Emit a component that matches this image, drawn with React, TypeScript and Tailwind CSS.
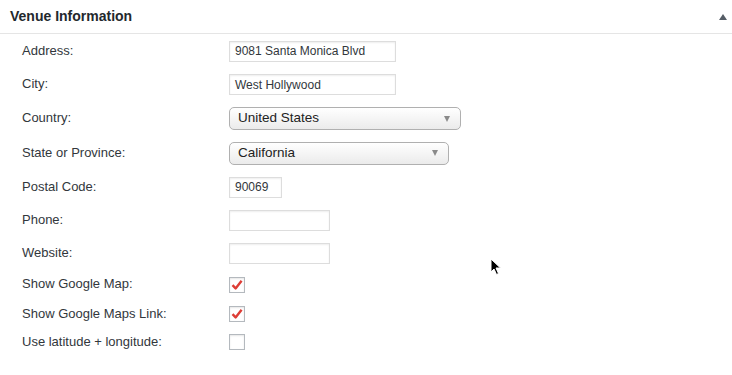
const font = { fontFamily: '"Liberation Sans", Arial, sans-serif' }

type Row = { label: string; h: string; field: React.ReactNode }

function TextInput({ value, w }: { value?: string; w: string }) {
  return (
    <div className={`${w} h-[21px] border border-[#dddddd] bg-white shadow-[inset_0_1px_2px_rgba(0,0,0,0.07)] flex items-center px-[5px] text-[12px] text-[#32373c]`}>
      {value}
    </div>
  )
}

function Select({ value, w }: { value: string; w: string }) {
  return (
    <div className={`${w} h-[23px] rounded-[5px] border border-[#b0b0b0] bg-gradient-to-b from-white via-[#f5f5f5] to-[#ebebeb] flex items-center justify-between pl-[8px] pr-[10px] text-[13.5px] text-[#222]`}>
      <span>{value}</span>
      <span className="w-0 h-0 border-l-[3.5px] border-r-[3.5px] border-t-[6px] border-l-transparent border-r-transparent border-t-[#8a8a8a]" />
    </div>
  )
}

function Checkbox({ checked }: { checked?: boolean }) {
  return (
    <div className="w-[16px] h-[16px] border border-[#b4b9be] bg-white shadow-[inset_0_1px_2px_rgba(0,0,0,0.1)] flex items-center justify-center">
      {checked && (
        <svg width="14" height="14" viewBox="0 0 14 14">
          <path d="M2.5 7.2 L5.6 10.4 L11.6 2.8" fill="none" stroke="#dd3d36" strokeWidth="2.4" strokeLinejoin="round" />
        </svg>
      )}
    </div>
  )
}

export default function App() {
  const rows: Row[] = [
    { label: "Address:", h: "h-[34px]", field: <TextInput value="9081 Santa Monica Blvd" w="w-[167px]" /> },
    { label: "City:", h: "h-[33px]", field: <TextInput value="West Hollywood" w="w-[167px]" /> },
    { label: "Country:", h: "h-[35px]", field: <Select value="United States" w="w-[232px]" /> },
    { label: "State or Province:", h: "h-[34px]", field: <Select value="California" w="w-[220px]" /> },
    { label: "Postal Code:", h: "h-[34px]", field: <TextInput value="90069" w="w-[53px]" /> },
    { label: "Phone:", h: "h-[33px]", field: <TextInput w="w-[101px]" /> },
    { label: "Website:", h: "h-[32px]", field: <TextInput w="w-[101px]" /> },
    { label: "Show Google Map:", h: "h-[31px]", field: <Checkbox checked /> },
    { label: "Show Google Maps Link:", h: "h-[28px]", field: <Checkbox checked /> },
    { label: "Use latitude + longitude:", h: "h-[28px]", field: <Checkbox /> },
  ]

  return (
    <div className="relative w-[732px] h-[375px] bg-white overflow-hidden" style={font}>
      <div className="h-[34px] border-b border-[#e5e5e5] flex items-center justify-between pl-[10px] pr-[5px]">
        <h2 className="text-[14px] font-bold text-[#23282d]">Venue Information</h2>
        <span className="w-0 h-0 border-l-[4px] border-r-[4px] border-b-[6px] border-l-transparent border-r-transparent border-b-[#555d66]" />
      </div>
      <div className="flex flex-col">
        {rows.map((r) => (
          <div key={r.label} className={`${r.h} flex items-center`}>
            <div className="w-[229px] pl-[22px] text-[13px] text-[#32373c] -mt-[1px]">{r.label}</div>
            {r.field}
          </div>
        ))}
      </div>
      <svg className="absolute left-[490px] top-[258px]" width="12" height="18" viewBox="0 0 12 18">
        <path d="M1 1 L1 14 L4 11 L6.5 16.5 L8.5 15.5 L6 10 L10.5 10 Z" fill="#000" stroke="#fff" strokeWidth="1" strokeLinejoin="round" />
      </svg>
    </div>
  )
}
